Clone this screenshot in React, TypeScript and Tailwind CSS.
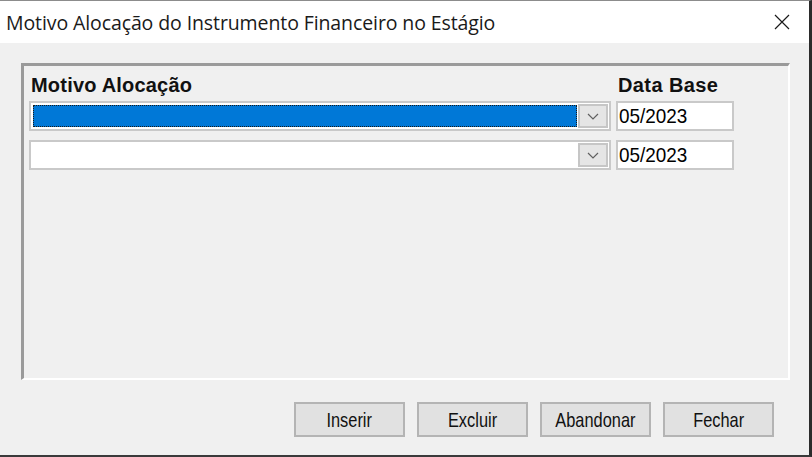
import React from 'react';

const Chevron = () => (
  <svg width="12" height="7" viewBox="0 0 12 7" className="block">
    <path d="M1 1 L6 6 L11 1" fill="none" stroke="#606060" strokeWidth="1.2" />
  </svg>
);

interface ComboRowProps {
  selected?: boolean;
}

const ComboRow: React.FC<ComboRowProps> = ({ selected = false }) => (
  <div className="flex items-center h-[30px]">
    <div className="w-[582px] h-[30px] flex bg-white border-2 border-[#c9c9c9] p-[1px]">
      <div className="flex-1 p-[1px]">
        {selected && (
          <div className="h-full bg-[#0078d7] outline-1 outline-dotted outline-[#1a1a1a] outline-offset-[-1px]" />
        )}
      </div>
      <div className="w-[30px] h-full bg-[#e5e5e5] border-2 border-[#c6c6c6] flex items-center justify-center">
        <Chevron />
      </div>
    </div>
    <div className="ml-[5px] w-[118px] h-[30px] bg-white border-2 border-[#c9c9c9] flex items-center overflow-hidden text-[21px] text-black">
      <span className="inline-block origin-left scale-x-[0.9] pl-[1px]">05/2023</span>
    </div>
  </div>
);

const buttons = ['Inserir', 'Excluir', 'Abandonar', 'Fechar'];

export default function App() {
  return (
    <div
      className="w-[812px] h-[457px] flex flex-col bg-[#f0f0f0] border-t border-[#8c8c8c] border-r-[3px] border-r-[#2b2b2b] border-b-2 border-b-[#3a3a3a] overflow-hidden"
      style={{ fontFamily: '"Liberation Sans", Arial, sans-serif' }}
    >
      {/* Title bar */}
      <div className="h-[42px] bg-white flex items-center justify-between pl-[6px] pr-[19px] shrink-0">
        <span className="text-[19.5px] text-[#1a1a1a] tracking-[-0.1px] pt-[1px]" style={{ fontFamily: '"Open Sans", "Noto Sans", sans-serif' }}>
          Motivo Alocação do Instrumento Financeiro no Estágio
        </span>
        <svg width="16" height="16" viewBox="0 0 16 16">
          <path d="M1 1 L15 15 M15 1 L1 15" stroke="#1a1a1a" strokeWidth="1.2" />
        </svg>
      </div>

      {/* Content */}
      <div className="flex-1 pl-[21px] pr-[19px] pt-[20px]">
        <div className="w-[769px] h-[317px] border-t-[3px] border-l-[3px] border-t-[#9a9a9a] border-l-[#9a9a9a] border-b-2 border-r-2 border-b-white border-r-white pl-[5px] pt-[7px]">
          <div className="flex items-end h-[24px] font-bold text-[20px] leading-[24px] text-[#111]">
            <span className="w-[589px] pl-[2px] tracking-[0.2px]">Motivo Alocação</span>
            <span className="tracking-[0.4px]">Data Base</span>
          </div>
          <div className="flex flex-col gap-[9px] mt-[4px]">
            <ComboRow selected />
            <ComboRow />
          </div>
        </div>

        <div className="flex justify-end gap-[12px] mt-[22px] pr-[16px]">
          {buttons.map((label) => (
            <button
              key={label}
              className="w-[111px] h-[35px] bg-[#e1e1e1] border-2 border-[#b4b4b4] text-[21px] text-[#111] flex items-center justify-center overflow-hidden"
            >
              <span className="inline-block scale-x-[0.78]">{label}</span>
            </button>
          ))}
        </div>
      </div>
    </div>
  );
}
